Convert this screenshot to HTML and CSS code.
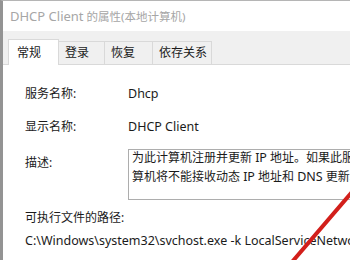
FILE: index.html
```html
<!DOCTYPE html>
<html lang="zh-CN">
<head>
    <meta charset="UTF-8">
    <title>DHCP Client 的属性(本地计算机)</title>
    <link rel="stylesheet" href="styles.css">
</head>
<body>
    <div class="window">
        <div class="titlebar"><span class="lat">DHCP Client</span> 的属性(本地计算机)</div>

        <div class="tabstrip">
            <div class="tab tab-active">常规</div>
            <div class="tab tab-login">登录</div>
            <div class="tab tab-restore">恢复</div>
            <div class="tab tab-deps">依存关系</div>
        </div>

        <div class="page">
            <div class="row">
                <div class="label">服务名称:</div>
                <div class="value lat">Dhcp</div>
            </div>
            <div class="row">
                <div class="label">显示名称:</div>
                <div class="value lat">DHCP Client</div>
            </div>
            <div class="row row-desc">
                <div class="label label-desc">描述:</div>
                <div class="desc-box">
                    <div class="desc-line">为此计算机注册并更新 <span class="lat">IP</span> 地址。如果此服务停止，</div>
                    <div class="desc-line">算机将不能接收动态 <span class="lat">IP</span> 地址和 <span class="lat">DNS</span> 更新。</div>
                </div>
            </div>
            <div class="path-label">可执行文件的路径:</div>
            <div class="path lat">C:\Windows\system32\svchost.exe -k LocalServiceNetworkRestricted -p</div>
        </div>

        <svg class="marker" width="70" height="80" viewBox="0 0 70 80">
            <line x1="12" y1="82" x2="72" y2="12" stroke="#d21f1b" stroke-width="4" stroke-linecap="round"/>
        </svg>
    </div>
</body>
</html>
```

FILE: styles.css
```css
:root {
    --text: #1b1b1b;
    --muted: #a6a6a6;
    --band: #f0f0f0;
    --line: #d9d9d9;
    --edge: #939393;
}

* {
    margin: 0;
    padding: 0;
    box-sizing: border-box;
}

body {
    width: 350px;
    height: 260px;
    overflow: hidden;
    background: #fff;
    font-family: "Noto Sans", "Noto Sans CJK SC", sans-serif;
    font-size: 12px;
    color: var(--text);
}

.lat {
    font-size: 12.5px;
}

.window {
    position: relative;
    height: 260px;
    border-left: 3px solid var(--edge);
    border-top: 1px solid #b5b5b5;
    overflow: hidden;
}

.titlebar {
    height: 30px;
    line-height: 30px;
    padding-left: 7px;
    font-size: 11.5px;
    color: var(--muted);
    white-space: nowrap;
}

.titlebar .lat {
    font-size: 13px;
}

.tabstrip {
    display: flex;
    align-items: flex-end;
    height: 34px;
    padding-left: 5px;
    background: var(--band);
    border-bottom: 1px solid var(--line);
}

.tab {
    height: 23px;
    line-height: 22px;
    padding-left: 6px;
    border: 1px solid var(--line);
    border-bottom: none;
    border-left: none;
    white-space: nowrap;
}

.tab-active {
    width: 51px;
    height: 26px;
    line-height: 25px;
    margin-bottom: -1px;
    padding-left: 8px;
    background: #fff;
    border-left: 1px solid var(--line);
}

.tab-login { width: 46px; }
.tab-restore { width: 48px; }
.tab-deps { width: 59px; }

.page {
    padding: 19px 0 0 22px;
}

.row {
    display: flex;
    line-height: 20px;
    margin-bottom: 13px;
    white-space: nowrap;
}

.row-desc {
    margin-top: -1px;
    margin-bottom: 8px;
}

.label {
    width: 103px;
    flex-shrink: 0;
}

.label-desc {
    padding-top: 4px;
}

.desc-box {
    flex-shrink: 0;
    width: 260px;
    height: 51px;
    padding: 0 0 0 3px;
    border: 1px solid #adadad;
    border-right: none;
    overflow: hidden;
}

.desc-line {
    line-height: 18px;
}

.desc-line:first-child {
    margin-top: -1px;
    margin-bottom: 1px;
}

.path-label {
    line-height: 20px;
    margin-bottom: 3px;
}

.path {
    line-height: 20px;
    white-space: nowrap;
}

.marker {
    position: absolute;
    right: 0;
    bottom: 0;
}
```
